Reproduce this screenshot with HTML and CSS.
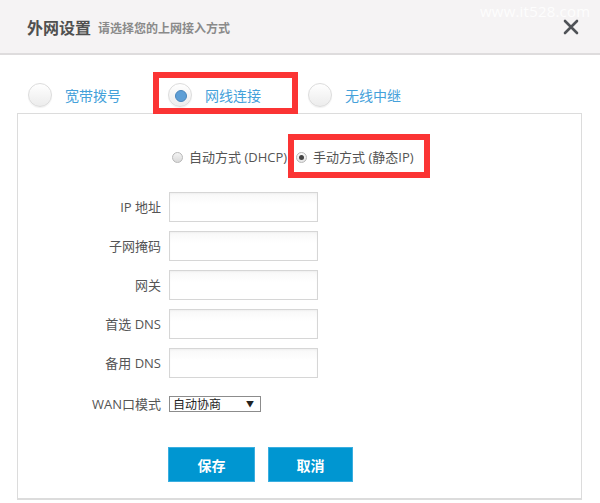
FILE: index.html
```html
<!DOCTYPE html>
<html lang="zh-CN">
<head>
<meta charset="utf-8">
<title>外网设置</title>
<link rel="stylesheet" href="styles.css">
</head>
<body>
<div class="page">
  <header class="header">
    <h1 class="title">外网设置</h1>
    <span class="subtitle">请选择您的上网接入方式</span>
    <span class="spacer"></span>
    <svg class="close" width="16" height="16" viewBox="0 0 16 16"><path d="M2 2 L14 14 M14 2 L2 14" stroke="#4f5257" stroke-width="2.6" stroke-linecap="round"/></svg>
  </header>
  <div class="watermark">www.it528.com</div>

  <div class="tabs">
    <div class="tab"><span class="bigradio"></span><span class="tab-text">宽带拨号</span></div>
    <div class="tab"><span class="bigradio on"></span><span class="tab-text">网线连接</span></div>
    <div class="tab"><span class="bigradio"></span><span class="tab-text">无线中继</span></div>
  </div>

  <div class="panel">
    <div class="modes">
      <span class="radio"></span><span class="mode-text">自动方式 (DHCP)</span>
      <span class="radio on"></span><span class="mode-text">手动方式 (静态IP)</span>
    </div>
    <div class="form">
      <label class="lbl">IP 地址</label><div class="input"></div>
      <label class="lbl">子网掩码</label><div class="input"></div>
      <label class="lbl">网关</label><div class="input"></div>
      <label class="lbl">首选 DNS</label><div class="input"></div>
      <label class="lbl">备用 DNS</label><div class="input"></div>
    </div>
    <div class="wanrow">
      <label class="lbl">WAN口模式</label>
      <div class="select"><span>自动协商</span><span class="arrow">▼</span></div>
    </div>
    <div class="buttons">
      <button class="btn">保存</button>
      <button class="btn btn2">取消</button>
    </div>
  </div>

  <div class="mark mark1"></div>
  <div class="mark mark2"></div>
</div>
</body>
</html>
```
FILE: styles.css
```css
* { box-sizing: border-box; }
html, body { margin: 0; padding: 0; background: #fff; }
body {
  font-family: "Open Sans", "Noto Sans CJK SC", sans-serif;
  color: #555;
  width: 600px;
  height: 503px;
  overflow: hidden;
}
.page { position: relative; width: 600px; height: 503px; }

.header {
  height: 55px;
  background: #f5f3f4;
  border-bottom: 2px solid #dedcdd;
  display: flex;
  align-items: center;
  padding: 0 21px 0 27px;
}
.title {
  margin: 0;
  font-family: "Noto Sans CJK SC", sans-serif;
  font-size: 16px;
  font-weight: bold;
  color: #505050;
  line-height: 20px;
}
.subtitle {
  font-family: "Noto Sans CJK SC", sans-serif;
  font-size: 12px;
  color: #8a8a8a;
  margin-left: 7px;
  font-weight: bold;
  line-height: 20px;
  padding-top: 2px;
}
.spacer { flex: 1; }
.close { margin-top: 1px; }

.watermark {
  position: absolute;
  left: 480px;
  top: 1px;
  font-family: "Open Sans", "Noto Sans", sans-serif;
  font-size: 15px;
  color: #fdfdfd;
  letter-spacing: 0.2px;
}

.tabs {
  display: flex;
  align-items: center;
  padding: 28px 0 6px 28px;
  height: 58px;
}
.tab {
  width: 140px;
  display: flex;
  align-items: center;
}
.bigradio {
  width: 24px;
  height: 24px;
  border-radius: 50%;
  border: 1px solid #dcdcdc;
  background: linear-gradient(#ffffff, #ececec);
  box-shadow: 0 1px 1px rgba(0,0,0,0.06);
  position: relative;
  flex: none;
}
.bigradio.on::after {
  content: "";
  position: absolute;
  left: 6px;
  top: 6px;
  width: 10px;
  height: 10px;
  border-radius: 50%;
  background: #5e9fd6;
  border: 1px solid #4a86bb;
}
.tab-text {
  margin-left: 13px;
  font-family: "Noto Sans CJK SC", sans-serif;
  font-size: 14px;
  color: #45a1da;
  line-height: 20px;
}

.panel {
  margin: 0 18px 0 17px;
  height: 387px;
  border: 1px solid #dcdcdc;
  border-bottom-width: 2px;
}
.modes {
  display: flex;
  align-items: center;
  padding: 33px 0 0 154px;
  height: 53px;
}
.radio {
  width: 11px;
  height: 11px;
  border-radius: 50%;
  border: 1px solid #b8b8b8;
  background: linear-gradient(#f4f4f4, #d9d9d9);
  position: relative;
  flex: none;
}
.radio.on { background: linear-gradient(#fafafa, #e4e4e4); }
.radio.on::after {
  content: "";
  position: absolute;
  left: 2px;
  top: 2px;
  width: 5px;
  height: 5px;
  border-radius: 50%;
  background: #444;
}
.mode-text {
  margin-left: 6px;
  margin-right: 9px;
  font-size: 13px;
  line-height: 20px;
  color: #555;
  white-space: nowrap;
}

.form {
  display: grid;
  grid-template-columns: 143px 149px;
  column-gap: 8px;
  row-gap: 9px;
  margin-top: 25px;
  align-items: center;
}
.lbl {
  text-align: right;
  font-size: 13px;
  color: #555;
  line-height: 20px;
  white-space: nowrap;
}
.input {
  height: 30px;
  border: 1px solid #d6d6d6;
  background: linear-gradient(#f8f8f8, #ffffff 40%);
  box-shadow: inset 0 1px 2px rgba(0,0,0,0.04);
}
.wanrow {
  display: grid;
  grid-template-columns: 143px auto;
  column-gap: 8px;
  margin-top: 16px;
  align-items: center;
}
.select {
  width: 92px;
  height: 16px;
  border: 1px solid #8c8c8c;
  font-family: "Noto Sans CJK SC", sans-serif;
  font-size: 12px;
  line-height: 14px;
  color: #222;
  display: flex;
  justify-content: space-between;
  padding: 0 6px 0 3px;
  background: #fff;
}
.arrow { font-size: 8px; color: #222; }

.buttons {
  display: flex;
  gap: 13px;
  margin: 33px 0 0 150px;
}
.btn {
  width: 87px;
  height: 35px;
  border: 1px solid #3aaee0;
  background: #0096d1;
  color: #fff;
  font-family: "Noto Sans CJK SC", sans-serif;
  font-size: 14px;
  font-weight: bold;
  padding: 0;
}
.btn2 { width: 85px; }

.mark {
  position: absolute;
  border: 6px solid #fb3434;
}
.mark1 { left: 153px; top: 72px; width: 145px; height: 42px; }
.mark2 { left: 288px; top: 134px; width: 142px; height: 44px; }
```
